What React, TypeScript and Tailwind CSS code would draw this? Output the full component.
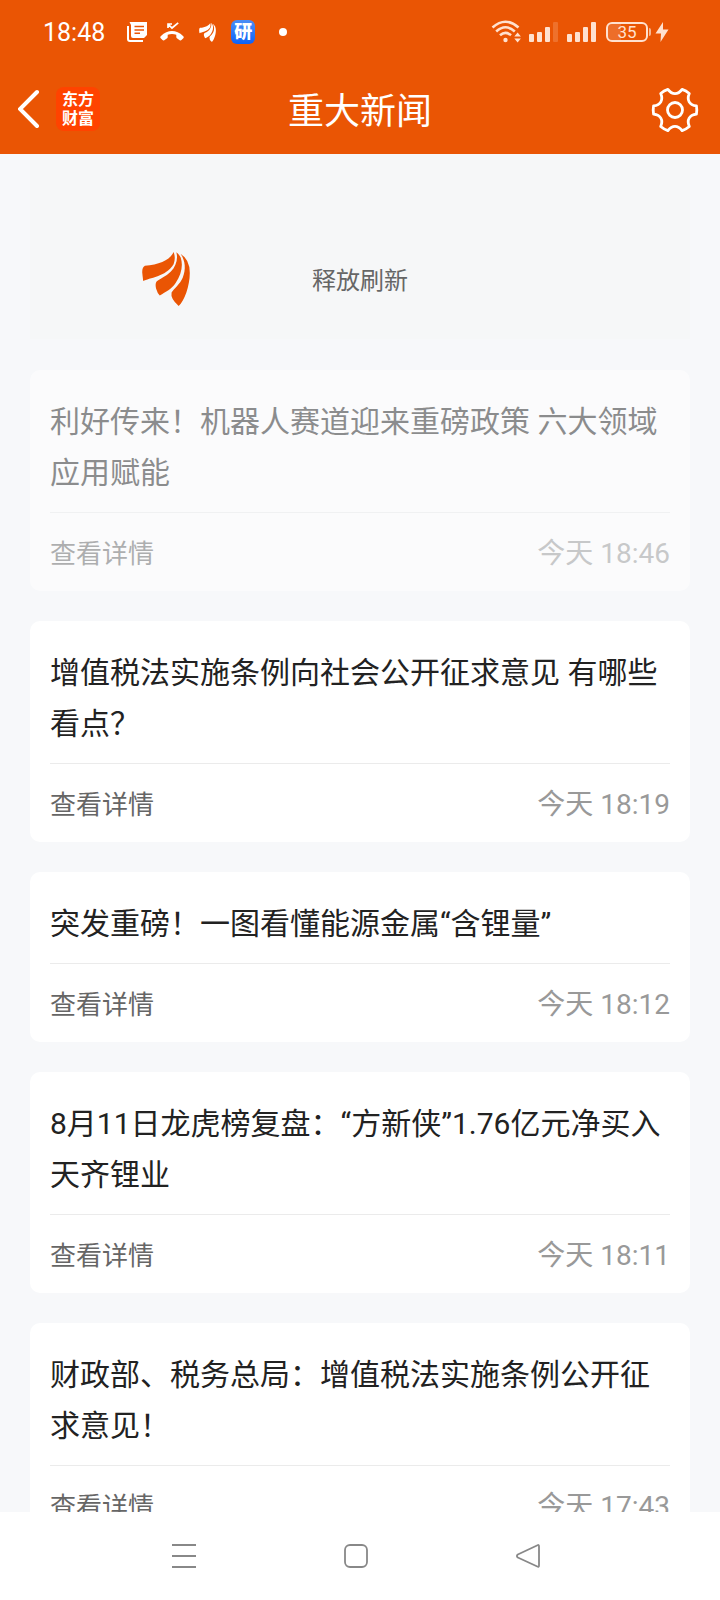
import type { ReactNode } from "react";

type NewsItem = { title: string; time: string; fading?: boolean };

const NEWS: NewsItem[] = [
  { title: "利好传来！机器人赛道迎来重磅政策 六大领域应用赋能", time: "今天 18:46", fading: true },
  { title: "增值税法实施条例向社会公开征求意见 有哪些看点？", time: "今天 18:19" },
  { title: "突发重磅！一图看懂能源金属“含锂量”", time: "今天 18:12" },
  { title: "8月11日龙虎榜复盘：“方新侠”1.76亿元净买入天齐锂业", time: "今天 18:11" },
  { title: "财政部、税务总局：增值税法实施条例公开征求意见！", time: "今天 17:43" },
];

function FeatherLogo({ className }: { className: string }) {
  return (
    <svg viewBox="0 0 141 160" className={className} fill="currentColor" aria-hidden="true">
      <path d="M93 0C84 22 52 38 8 41Q0 45 0 60Q1 72 3 86C20 76 70 74 93 36Q100 18 93 0Z" />
      <path d="M101 1C107 20 100 42 85 58C70 74 50 80 42 88Q38 95 41 108Q45 122 52 129C70 118 87 110 99 92C116 68 122 40 114 16Q108 6 101 1Z" />
      <path d="M114 6C128 26 130 52 120 76C112 95 95 107 87 120Q83 138 108 160C125 145 141 100 141 62Q141 22 114 6Z" />
    </svg>
  );
}

function NewsIcon() {
  return (
    <svg viewBox="0 0 20 20" className="size-5" aria-hidden="true">
      <path d="M1 4V17Q1 19 3 19H16" fill="none" stroke="currentColor" strokeWidth="2" />
      <path
        fill="currentColor"
        fillRule="evenodd"
        d="M2.500 0H20V13L17 16H6Q4 16 4 14V3ZM7.500 3.800V5.300H17V3.800ZM7.500 7.200V8.700H17V7.200ZM7.500 10.600V12.100H13V10.600Z"
      />
    </svg>
  );
}

function MissedCallIcon() {
  return (
    <svg viewBox="0 0 24 20" className="h-5 w-6" aria-hidden="true">
      <path d="M8 6V2H12M8.300 2.300L12 6L18.200 0.800" fill="none" stroke="currentColor" strokeWidth="1.700" />
      <path
        fill="currentColor"
        d="M0.700 14.200Q12 4 23.300 14.200Q24.200 15.200 23.300 16.200L21.500 18Q20.700 18.800 19.700 18.200L16.900 16.300Q16.300 15.800 16.300 15V12.700Q12 11.300 7.700 12.700V15Q7.700 15.800 7.100 16.300L4.300 18.200Q3.300 18.800 2.500 18L0.700 16.200Q-0.200 15.200 0.700 14.200Z"
      />
    </svg>
  );
}

function WifiIcon() {
  return (
    <svg viewBox="0 0 32 24" className="h-6 w-8" fill="none" stroke="currentColor" aria-hidden="true">
      <path d="M1.500 7.500Q14.500 -4 27.500 7.500" strokeWidth="2.600" />
      <path d="M5.200 11.500Q14.500 3 23.800 11.500" strokeWidth="2.600" />
      <path d="M9 15.300Q14.500 10.400 20 15.300" strokeWidth="2.600" />
      <circle cx="14.500" cy="20" r="2.200" fill="currentColor" stroke="none" />
      <path d="M23.300 16.500L26.600 12.500L29.900 16.500ZM23.300 18.500L26.600 22.500L29.900 18.500Z" fill="currentColor" stroke="none" />
    </svg>
  );
}

function SignalIcon({ weak = false }: { weak?: boolean }) {
  return (
    <svg viewBox="0 0 29 20" className="h-5 w-[29px]" fill="currentColor" aria-hidden="true">
      <rect x="0" y="12" width="5" height="8" rx="1" />
      <rect x="8" y="10" width="5" height="10" rx="1" />
      <rect x="16" y="5" width="5" height="15" rx="1" />
      <rect x="24" y="0" width="5" height="20" rx="1" opacity={weak ? 0.2 : 1} />
    </svg>
  );
}

function Battery({ level }: { level: number }) {
  return (
    <div className="flex items-center gap-px">
      <div className="relative h-5 w-[42px] overflow-hidden rounded-md border-2 border-current">
        <div className="h-full bg-white/15" style={{ width: `${level}%` }} />
        <span className="absolute inset-0 flex items-center justify-center text-[17px] leading-4">
          {level}
        </span>
      </div>
      <div className="h-2 w-0.5 rounded-r-sm bg-current opacity-70" />
    </div>
  );
}

function StatusBar() {
  return (
    <div className="flex h-16 items-center justify-between pr-[51px] pl-[43px] text-white">
      <div className="flex items-center">
        <time className="pt-0.5 text-[25px] leading-8">18:48</time>
        <div className="ml-[22px] flex items-center gap-[13px]">
          <NewsIcon />
          <MissedCallIcon />
          <FeatherLogo className="mx-0.5 h-[19px] w-[17px]" />
          <span className="flex size-6 items-center justify-center rounded-md bg-linear-to-b from-[#4a8df5] to-[#0a62f8] text-lg leading-6 font-black">
            研
          </span>
        </div>
        <span className="ml-6 size-2 rounded-full bg-white" />
      </div>
      <div className="flex items-center text-[#ffe1cf]">
        <WifiIcon />
        <div className="ml-1.5 flex items-center gap-[9px]">
          <SignalIcon weak />
          <SignalIcon />
        </div>
        <div className="ml-2.5 flex items-center gap-1">
          <Battery level={35} />
          <svg viewBox="0 0 14 20" className="h-5 w-3.5" fill="currentColor" aria-hidden="true">
            <path d="M8 0L0.500 11.500H6L5.500 20L13.500 7.500H8Z" />
          </svg>
        </div>
      </div>
    </div>
  );
}

function polar(radius: number, degrees: number) {
  const a = (degrees * Math.PI) / 180;
  return `${(radius * Math.cos(a)).toFixed(2)} ${(radius * Math.sin(a)).toFixed(2)}`;
}

const GEAR_PATH =
  [0, 60, 120, 180, 240, 300]
    .map(
      (a, i) =>
        `${i === 0 ? "M" : "L"}${polar(21.8, a - 11)}Q${polar(22.2, a)} ${polar(21.8, a + 11)}C${polar(15.2, a + 19)} ${polar(15.2, a + 41)} ${polar(21.8, a + 49)}`,
    )
    .join("") + "Z";

function GearIcon() {
  return (
    <svg
      viewBox="-24 -24 48 48"
      className="size-12"
      fill="none"
      stroke="currentColor"
      strokeWidth="2.800"
      strokeLinejoin="round"
      aria-hidden="true"
    >
      <path d={GEAR_PATH} />
      <circle r="7.500" />
    </svg>
  );
}

function TitleBar() {
  return (
    <div className="grid h-[90px] grid-cols-[1fr_auto_1fr] items-center px-[18px] text-white">
      <div className="flex items-center gap-3.5">
        <button type="button" aria-label="返回">
          <svg viewBox="0 0 24 40" className="h-10 w-6" fill="none" stroke="currentColor" strokeWidth="4" strokeLinecap="round" aria-hidden="true">
            <path d="M19 3L2 20L19 37" />
          </svg>
        </button>
        <a href="#home" className="flex size-11 flex-col items-center justify-center rounded-lg bg-[#ff4300] text-base leading-[19px] font-bold">
          <span>东方</span>
          <span>财富</span>
        </a>
      </div>
      <h1 className="pt-1.5 text-4xl">重大新闻</h1>
      <button type="button" aria-label="设置" className="mr-[3px] justify-self-end pt-0.5">
        <GearIcon />
      </button>
    </div>
  );
}

function NewsCard({ title, time, fading }: NewsItem) {
  return (
    <article className={`rounded-[10px] bg-white px-5 ${fading ? "opacity-50" : ""}`}>
      <h2 className="border-b border-[#ebebeb] pt-[26px] pb-3.5 text-[30px] leading-[51px] text-[#222222]">{title}</h2>
      <div className="flex h-[78px] items-center justify-between pt-1">
        <a href="#detail" className="text-[26px] leading-10 text-[#666666]">
          查看详情
        </a>
        <time className="text-[28px] leading-10 text-[#999999]">{time}</time>
      </div>
    </article>
  );
}

function NavButton({ label, children }: { label: string; children: ReactNode }) {
  return (
    <button type="button" aria-label={label}>
      <svg viewBox="0 0 26 26" className="size-[26px]" fill="none" stroke="currentColor" strokeWidth="1.800" strokeLinejoin="round" aria-hidden="true">
        {children}
      </svg>
    </button>
  );
}

export default function App() {
  return (
    <div className="flex h-screen flex-col bg-[#f7f8fa] font-['Roboto','Noto_Sans_CJK_SC',sans-serif]">
      <header className="shrink-0 bg-[#ea5504]">
        <StatusBar />
        <TitleBar />
      </header>
      <main className="min-h-0 flex-1 overflow-y-auto px-[30px] pb-[30px] [scrollbar-width:none]">
        <div className="grid h-[185px] grid-cols-[1fr_auto_1fr] items-center bg-[#f6f7f8] pt-16">
          <FeatherLogo className="ml-28 h-[54px] w-12 text-[#ea5504]" />
          <p className="pt-1 text-2xl text-[#666666]">释放刷新</p>
        </div>
        <div className="mt-[31px] flex flex-col gap-[30px]">
          {NEWS.map((item) => (
            <NewsCard key={item.title} {...item} />
          ))}
        </div>
      </main>
      <nav className="flex h-[88px] shrink-0 items-center justify-center gap-[146px] bg-white pr-2 text-[#888888]">
        <NavButton label="最近任务">
          <path d="M1 2H25M1 13H25M1 24H25" />
        </NavButton>
        <NavButton label="主屏幕">
          <rect x="2" y="2" width="22" height="22" rx="5" />
        </NavButton>
        <NavButton label="后退">
          <path d="M22.500 2.200Q24 1.500 24 3.500V22.500Q24 24.500 22.300 23.500L2.800 14.500Q1 13 2.800 11.500Z" />
        </NavButton>
      </nav>
    </div>
  );
}
